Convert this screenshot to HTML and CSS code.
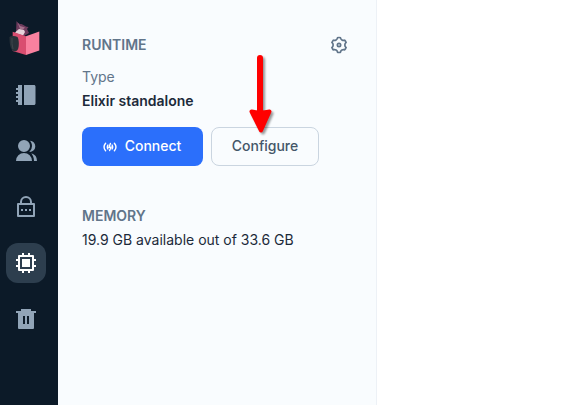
FILE: index.html
```html
<!DOCTYPE html>
<html lang="en">
<head>
<meta charset="utf-8">
<title>Runtime</title>
<link rel="stylesheet" href="styles.css">
</head>
<body>
<div class="app">
  <nav class="sidebar">
    <a class="logo">
      <svg width="32" height="38" viewBox="0 0 32 38">
        <path d="M7.500 2c2 3 3 3 5 3 3 1 4 3 7 3l-1.500 2 2 4-5 3-8-3z" fill="#6d3b5c"/>
        <path d="M8.500 3l2.500 4 5 1.500-2 2-3-.5z" fill="#a5718d"/>
        <path d="M7 12.500l3-2.500 5 1 1 2-2 3.500L6 14z" fill="#e6d3da"/>
        <path d="M3.700 12.700L17 17.300V36L3.700 32z" fill="#d94e70"/>
        <path d="M17 17.300l13.300-4.800v19L17 36z" fill="#f9819f"/>
        <path d="M.5 18c1.500-1 5-1.500 8 0 1.500 2 2 10 0 13-1.500 2-4 1.500-5.500 0C1 28 .5 24 .5 18z" fill="#293239"/>
        <path d="M3 19q-.5 6 1 11" fill="none" stroke="#3e464c"/>
      </svg>
    </a>
    <a class="item"><svg viewBox="0 0 24 24"><path d="M4 2h4v20H4v-3H2v-2h2v-2H2v-2h2v-2H2V9h2V7H2V5h2zM10 2h10c.8 0 1.500.7 1.500 1.500v17c0 .8-.7 1.500-1.500 1.500H10z"/></svg></a>
    <a class="item"><svg viewBox="0 0 24 24"><path d="M2 22a8 8 0 0 1 16 0zM10 13a6 6 0 1 1 0-12 6 6 0 0 1 0 12zM17.360 14.230A8.010 8.010 0 0 1 23 22h-3c0-3-1.100-5.730-2.640-7.770zM15.340 12.960A7.980 7.980 0 0 0 18 7c0-2.020-.75-3.860-1.980-5.270a5.500 5.500 0 0 1-.68 11.230z"/></svg></a>
    <a class="item"><svg viewBox="0 0 24 24"><path fill-rule="evenodd" d="M18 8h2a1 1 0 0 1 1 1v12a1 1 0 0 1-1 1H4a1 1 0 0 1-1-1V9a1 1 0 0 1 1-1h2V7a6 6 0 1 1 12 0v1zM5 10v10h14V10H5zm6 4h2v2h-2v-2zm-4 0h2v2H7v-2zm8 0h2v2h-2v-2zm1-6V7a4 4 0 1 0-8 0v1h8z"/></svg></a>
    <a class="item active"><svg viewBox="0 0 24 24"><path fill-rule="evenodd" d="M6 18h12V6H6v12zm8 2h-4v2H8v-2H5a1 1 0 0 1-1-1v-3H2v-2h2v-4H2V8h2V5a1 1 0 0 1 1-1h3V2h2v2h4V2h2v2h3a1 1 0 0 1 1 1v3h2v2h-2v4h2v2h-2v3a1 1 0 0 1-1 1h-3v2h-2v-2zM8 8h8v8H8V8z"/></svg></a>
    <a class="item"><svg viewBox="0 0 24 24"><path fill-rule="evenodd" d="M17 4h5v2h-2v15a1 1 0 0 1-1 1H5a1 1 0 0 1-1-1V6H2V4h5V2h10v2zM9 9v8h2V9H9zm4 0v8h2V9h-2z"/></svg></a>
  </nav>
  <section class="panel">
    <header class="head">
      <h3>RUNTIME</h3>
      <svg class="gear" viewBox="0 0 24 24"><path d="M3.340 17a10.018 10.018 0 0 1-.978-2.326 3 3 0 0 0 .002-5.347A9.990 9.990 0 0 1 4.865 4.990a3 3 0 0 0 4.631-2.674 9.990 9.990 0 0 1 5.007.002 3 3 0 0 0 4.632 2.672c.579.59 1.093 1.261 1.525 2.010.433.749.757 1.530.978 2.326a3 3 0 0 0-.002 5.347 9.990 9.990 0 0 1-2.501 4.337 3 3 0 0 0-4.631 2.674 9.990 9.990 0 0 1-5.007-.002 3 3 0 0 0-4.632-2.672A10.018 10.018 0 0 1 3.340 17zm5.660.196a4.993 4.993 0 0 1 2.250 2.770c.499.047 1 .048 1.499.001A4.993 4.993 0 0 1 15 17.197a4.993 4.993 0 0 1 3.525-.565c.29-.408.54-.843.748-1.298A4.993 4.993 0 0 1 18 12c0-1.260.47-2.437 1.273-3.334a8.126 8.126 0 0 0-.75-1.298A4.993 4.993 0 0 1 15 6.804a4.993 4.993 0 0 1-2.250-2.770c-.499-.047-1-.048-1.499-.001A4.993 4.993 0 0 1 9 6.803a4.993 4.993 0 0 1-3.525.565 7.990 7.990 0 0 0-.748 1.298A4.993 4.993 0 0 1 6 12c0 1.260-.47 2.437-1.273 3.334a8.126 8.126 0 0 0 .75 1.298A4.993 4.993 0 0 1 9 17.196zM12 15a3 3 0 1 1 0-6 3 3 0 0 1 0 6zm0-2a1 1 0 1 0 0-2 1 1 0 0 0 0 2z"/></svg>
    </header>
    <div class="label">Type</div>
    <div class="value">Elixir standalone</div>
    <div class="buttons">
      <button class="btn primary">
        <svg viewBox="0 0 14 14"><path d="M2.600 3.200a6 6 0 0 0 0 7.600M4.900 5a4 4 0 0 0 0 4M11.400 3.200a6 6 0 0 1 0 7.600M9.100 5a4 4 0 0 1 0 4M7.400 3.500L6 7.300h2L6.600 10.500"/></svg>
        <span>Connect</span>
      </button>
      <button class="btn outline">Configure</button>
    </div>
    <h3 class="memory">MEMORY</h3>
    <p class="usage">19.9 GB available out of 33.6 GB</p>
  </section>
  <svg class="arrow" width="36" height="88" viewBox="0 0 36 88"><path d="M16 8v56" stroke="#f00" stroke-width="6" stroke-linecap="round"/><path d="M7.500 61.500q8.500 2 18 0l-8.500 19z" fill="#f00" stroke="#f00" stroke-width="4" stroke-linejoin="round"/></svg>
</div>
</body>
</html>
```
FILE: styles.css
```css
* { box-sizing: border-box; }
body { margin: 0; background: #fff; font: 14px/20px Inter, sans-serif; color: #1c2a3a; }
.app { display: flex; height: 405px; position: relative; overflow: hidden; }
.sidebar { width: 58px; padding: 19px 12px 0 6px; background: #0c1a28; display: flex; flex-direction: column; gap: 16px; }
.logo { height: 40px; padding-left: 3px; }
.logo svg { display: block; }
.item { width: 40px; height: 40px; border-radius: 12px; display: flex; align-items: center; justify-content: center; fill: #91a4b7; }
.item svg { width: 24px; height: 24px; }
.active { background: #2d3e4e; fill: #fff; }
.panel { width: 319px; padding: 35px 29px 0 24px; background: #f9fcfe; border-right: 1px solid #edf1f6; }
.head { display: flex; justify-content: space-between; align-items: center; height: 20px; }
h3 { margin: 0; font-size: 14px; line-height: 20px; font-weight: 600; color: #61758a; }
.gear { width: 20px; height: 20px; margin-right: -2px; fill: #61758a; }
.label { margin-top: 12px; color: #61758a; }
.value { margin-top: 4px; font-weight: 600; }
.buttons { display: flex; gap: 8px; margin-top: 16px; }
.btn { height: 39px; border-radius: 8px; border: 1px solid transparent; padding: 0 0 1px; font: 500 14px/20px Inter, sans-serif; display: flex; align-items: center; justify-content: center; }
.primary { width: 121px; gap: 8px; padding-right: 1px; background: #2b6ffb; color: #fff; }
.primary svg { width: 14px; height: 14px; margin-top: 1px; }
.primary path { fill: none; stroke: #fff; stroke-width: 1.4; stroke-linecap: round; }
.outline { width: 108px; background: #f9fcfe; border-color: #cad5e0; color: #445668; }
.memory { margin-top: 40px; }
.usage { margin: 4px 0 0; }
.arrow { position: absolute; left: 244px; top: 50px; filter: drop-shadow(2px 2px 1px rgba(0, 0, 0, .4)); }
```
